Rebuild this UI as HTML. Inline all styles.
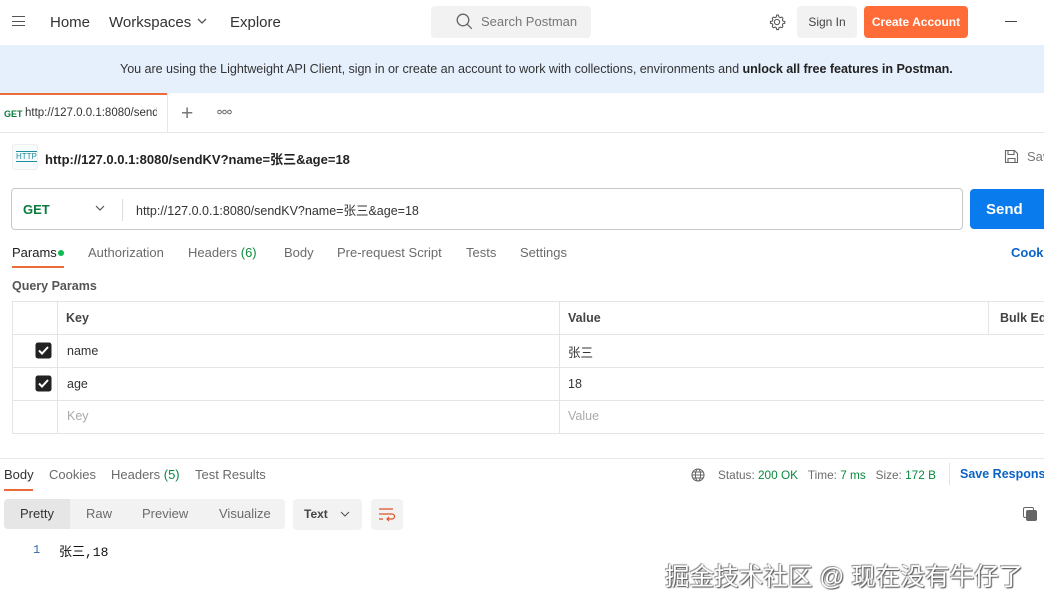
<!DOCTYPE html>
<html><head><meta charset="utf-8"><style>
*{margin:0;padding:0;box-sizing:border-box}
body{width:1044px;height:606px;overflow:hidden;background:#fff;font-family:"Liberation Sans","Noto Sans CJK SC",sans-serif;color:#212121;position:relative}
.a{position:absolute;white-space:nowrap}
.g{color:#6b6b6b}
</style></head><body>
<div class="a" style="left:12px;top:16px;width:13px;height:10px;border-top:1.5px solid #555;border-bottom:1.5px solid #555"></div>
<div class="a" style="left:12px;top:20.5px;width:13px;height:1.5px;background:#555"></div>
<div class="a" style="left:50px;top:14px;font-size:15px;color:#333">Home</div>
<div class="a" style="left:109px;top:14px;font-size:15px;color:#333">Workspaces</div>
<svg class="a" style="left:197px;top:18px" width="10" height="7"><path d="M1 1l4 4 4-4" stroke="#555" fill="none" stroke-width="1.3"/></svg>
<div class="a" style="left:230px;top:14px;font-size:15px;color:#333">Explore</div>
<div class="a" style="left:431px;top:6px;width:160px;height:32px;background:#f2f2f2;border-radius:4px"></div>
<svg class="a" style="left:456px;top:13px" width="17" height="17"><circle cx="7" cy="7" r="5.8" stroke="#666" fill="none" stroke-width="1.3"/><path d="M11.3 11.3l4.5 4.5" stroke="#666" stroke-width="1.3"/></svg>
<div class="a g" style="left:481px;top:14px;font-size:13px;color:#777">Search Postman</div>
<svg class="a" style="left:768px;top:13px" width="18" height="18" viewBox="0 0 24 24"><path d="M12 2.5l2 .4.5 2.3 1.7 1 2.2-.8 1.5 1.5-.8 2.2 1 1.7 2.3.5v2.4l-2.3.5-1 1.7.8 2.2-1.5 1.5-2.2-.8-1.7 1-.5 2.3h-2.4l-.5-2.3-1.7-1-2.2.8-1.5-1.5.8-2.2-1-1.7-2.3-.5v-2.4l2.3-.5 1-1.7-.8-2.2 1.5-1.5 2.2.8 1.7-1 .5-2.3z" fill="none" stroke="#555" stroke-width="1.4"/><circle cx="12" cy="12" r="3.5" fill="none" stroke="#555" stroke-width="1.4"/></svg>
<div class="a" style="left:797px;top:6px;width:60px;height:32px;background:#f2f2f2;border-radius:4px;font-size:12px;color:#444;text-align:center;line-height:32px">Sign In</div>
<div class="a" style="left:864px;top:6px;width:104px;height:32px;background:#ff6c37;border-radius:4px;font-size:12px;color:#fff;font-weight:bold;text-align:center;line-height:32px">Create Account</div>
<div class="a" style="left:1005px;top:21px;width:12px;height:1.3px;background:#444"></div>
<div class="a" style="left:0;top:45px;width:1044px;height:48px;background:#e6f0fd"></div>
<div class="a" style="left:120px;top:62px;font-size:12.6px;color:#333;letter-spacing:-0.05px">You are using the Lightweight API Client, sign in or create an account to work with collections, environments and <b style="color:#222">unlock all free features in Postman.</b></div>
<div class="a" style="left:0;top:93px;width:167px;height:2px;background:#ec6b3b"></div>
<div class="a" style="left:167px;top:93px;width:1px;height:40px;background:#e6e6e6"></div>
<div class="a" style="left:0;top:132px;width:1044px;height:1px;background:#e6e6e6"></div>
<div class="a" style="left:4px;top:109px;font-size:9px;color:#0b7a3e;font-weight:bold">GET</div>
<div class="a" style="left:25px;top:107px;font-size:11.5px;color:#333;width:132px;overflow:hidden">http://127.0.0.1:8080/sendKV</div>
<div class="a" style="left:181px;top:102px;font-size:21px;color:#777;font-weight:300">+</div>
<svg class="a" style="left:217px;top:109px" width="15" height="6"><circle cx="2.5" cy="3" r="1.8" fill="none" stroke="#666"/><circle cx="7.5" cy="3" r="1.8" fill="none" stroke="#666"/><circle cx="12.5" cy="3" r="1.8" fill="none" stroke="#666"/></svg>
<div class="a" style="left:12px;top:144px;width:26px;height:26px;border:1px solid #eee;border-radius:3px;background:#f8fbfb"></div>
<div class="a" style="left:16px;top:151px;font-size:8px;color:#1f8ca0;border-top:1px solid #1f8ca0;border-bottom:1px solid #1f8ca0;line-height:9px">HTTP</div>
<div class="a" style="left:45px;top:149px;font-size:13px;font-weight:bold;color:#222">http://127.0.0.1:8080/sendKV?name=张三&amp;age=18</div>
<svg class="a" style="left:1004px;top:149px" width="15" height="15"><path d="M1.5 1.5h9l3 3v9h-12z M4 1.5v4h6v-4 M4 13.5v-4h7v4" fill="none" stroke="#666" stroke-width="1.1"/></svg>
<div class="a" style="left:1027px;top:149px;font-size:13px;color:#777">Sav</div>
<div class="a" style="left:11px;top:188px;width:952px;height:42px;border:1px solid #c8c8c8;border-radius:4px"></div>
<div class="a" style="left:122px;top:199px;width:1px;height:22px;background:#ddd"></div>
<div class="a" style="left:23px;top:202px;font-size:13px;font-weight:bold;color:#0b7a3e">GET</div>
<svg class="a" style="left:95px;top:205px" width="10" height="7"><path d="M1 1l4 4 4-4" stroke="#555" fill="none" stroke-width="1.2"/></svg>
<div class="a" style="left:136px;top:200px;font-size:12.5px;color:#333">http://127.0.0.1:8080/sendKV?name=张三&amp;age=18</div>
<div class="a" style="left:970px;top:189px;width:80px;height:40px;background:#097bed;border-radius:4px;color:#fff;font-weight:bold;font-size:15px;line-height:40px;padding-left:16px;padding-top:1px">Send</div>
<div class="a" style="left:12px;top:245px;font-size:13px;color:#222">Params</div>
<div class="a" style="left:58px;top:250px;width:6px;height:6px;border-radius:3px;background:#0cbb52"></div>
<div class="a" style="left:12px;top:266px;width:52px;height:2px;background:#ec6b3b"></div>
<div class="a g" style="left:88px;top:245px;font-size:13px">Authorization</div>
<div class="a g" style="left:188px;top:245px;font-size:13px">Headers <span style="color:#0a8a3e">(6)</span></div>
<div class="a g" style="left:284px;top:245px;font-size:13px">Body</div>
<div class="a g" style="left:337px;top:245px;font-size:13px">Pre-request Script</div>
<div class="a g" style="left:466px;top:245px;font-size:13px">Tests</div>
<div class="a g" style="left:520px;top:245px;font-size:13px">Settings</div>
<div class="a" style="left:1011px;top:245px;font-size:13px;color:#0b63c5;font-weight:bold">Cooki</div>
<div class="a" style="left:12px;top:279px;font-size:12.5px;color:#555;font-weight:bold">Query Params</div>
<div class="a" style="left:12px;top:301px;width:1040px;height:133px;border:1px solid #e4e4e4"></div>
<div class="a" style="left:57px;top:301px;width:1px;height:133px;background:#e4e4e4"></div>
<div class="a" style="left:559px;top:301px;width:1px;height:133px;background:#e4e4e4"></div>
<div class="a" style="left:988px;top:301px;width:1px;height:33px;background:#e4e4e4"></div>
<div class="a" style="left:12px;top:334px;width:1040px;height:1px;background:#e4e4e4"></div>
<div class="a" style="left:12px;top:367px;width:1040px;height:1px;background:#e4e4e4"></div>
<div class="a" style="left:12px;top:400px;width:1040px;height:1px;background:#e4e4e4"></div>
<div class="a" style="left:66px;top:311px;font-size:12.5px;font-weight:bold;color:#444">Key</div>
<div class="a" style="left:568px;top:311px;font-size:12.5px;font-weight:bold;color:#444">Value</div>
<div class="a" style="left:1000px;top:311px;font-size:12.5px;font-weight:bold;color:#444">Bulk Ed</div>
<svg class="a" style="left:35px;top:342px" width="17" height="17"><rect x="0.5" y="0.5" width="16" height="16" rx="2.5" fill="#222"/><path d="M4 8.5l3 3 6-6.5" stroke="#fff" stroke-width="2" fill="none"/></svg>
<svg class="a" style="left:35px;top:375px" width="17" height="17"><rect x="0.5" y="0.5" width="16" height="16" rx="2.5" fill="#222"/><path d="M4 8.5l3 3 6-6.5" stroke="#fff" stroke-width="2" fill="none"/></svg>
<div class="a" style="left:67px;top:344px;font-size:12.5px;color:#333">name</div>
<div class="a" style="left:568px;top:342px;font-size:12.5px;color:#333">张三</div>
<div class="a" style="left:67px;top:377px;font-size:12.5px;color:#333">age</div>
<div class="a" style="left:568px;top:377px;font-size:12.5px;color:#333">18</div>
<div class="a" style="left:67px;top:409px;font-size:12.5px;color:#aaa">Key</div>
<div class="a" style="left:568px;top:409px;font-size:12.5px;color:#aaa">Value</div>
<div class="a" style="left:0;top:458px;width:1044px;height:1px;background:#e8e8e8"></div>
<div class="a" style="left:4px;top:467px;font-size:13px;color:#333">Body</div>
<div class="a" style="left:4px;top:489px;width:29px;height:2px;background:#ec6b3b"></div>
<div class="a g" style="left:49px;top:467px;font-size:13px">Cookies</div>
<div class="a g" style="left:111px;top:467px;font-size:13px">Headers <span style="color:#0a8a3e">(5)</span></div>
<div class="a g" style="left:195px;top:467px;font-size:13px">Test Results</div>
<svg class="a" style="left:691px;top:468px" width="14" height="14"><circle cx="7" cy="7" r="6" fill="none" stroke="#666" stroke-width="1.1"/><ellipse cx="7" cy="7" rx="2.6" ry="6" fill="none" stroke="#666" stroke-width="1"/><path d="M1 7h12M2 4h10M2 10h10" stroke="#666" stroke-width="0.9"/></svg>
<div class="a g" style="left:718px;top:468px;font-size:11.8px">Status: <span style="color:#0a8a3e">200 OK</span>&nbsp;&nbsp;&nbsp;Time: <span style="color:#0a8a3e">7 ms</span>&nbsp;&nbsp;&nbsp;Size: <span style="color:#0a8a3e">172 B</span></div>
<div class="a" style="left:949px;top:463px;width:1px;height:22px;background:#e4e4e4"></div>
<div class="a" style="left:960px;top:467px;font-size:12.5px;color:#0b63c5;font-weight:bold">Save Response</div>
<div class="a" style="left:4px;top:499px;width:281px;height:30px;background:#f2f2f2;border-radius:4px"></div>
<div class="a" style="left:4px;top:499px;width:66px;height:30px;background:#e6e6e6;border-radius:4px 0 0 4px"></div>
<div class="a" style="left:20px;top:506px;font-size:13px;color:#333">Pretty</div>
<div class="a g" style="left:86px;top:506px;font-size:13px">Raw</div>
<div class="a g" style="left:142px;top:506px;font-size:13px">Preview</div>
<div class="a g" style="left:219px;top:506px;font-size:13px">Visualize</div>
<div class="a" style="left:293px;top:499px;width:69px;height:31px;background:#f2f2f2;border-radius:4px"></div>
<div class="a" style="left:304px;top:507px;font-size:12px;color:#444;font-weight:bold">Text</div>
<svg class="a" style="left:340px;top:511px" width="10" height="7"><path d="M1 1l4 4 4-4" stroke="#555" fill="none" stroke-width="1.1"/></svg>
<div class="a" style="left:371px;top:499px;width:32px;height:31px;background:#f2f2f2;border-radius:4px"></div>
<svg class="a" style="left:378px;top:507px" width="18" height="15"><path d="M1 2h14M1 7h13a2.5 2.5 0 0 1 0 5h-5M11 10l-2 2 2 2M1 12h4" stroke="#e0522a" stroke-width="1.2" fill="none"/></svg>
<div class="a" style="left:1023px;top:507px;width:11px;height:11px;border:1.5px solid #666;border-radius:2px"></div>
<div class="a" style="left:1026px;top:510px;width:11px;height:11px;background:#666;border-radius:2px"></div>
<div class="a" style="left:33px;top:543px;font-size:12px;color:#2d6aa5;font-family:'Liberation Mono',monospace">1</div>
<div class="a" style="left:59px;top:541px;font-size:13px;color:#111;font-family:'Liberation Mono','Noto Sans CJK SC',monospace">张三,18</div>
<div class="a" style="left:665px;top:557px;font-size:24.6px;color:#fff;text-shadow:1px 1px 1px #555,-1px -1px 0 #999,0 0 2px #777;font-family:'Liberation Sans','Noto Sans CJK SC',sans-serif">掘金技术社区 @ 现在没有牛仔了</div>
</body></html>
